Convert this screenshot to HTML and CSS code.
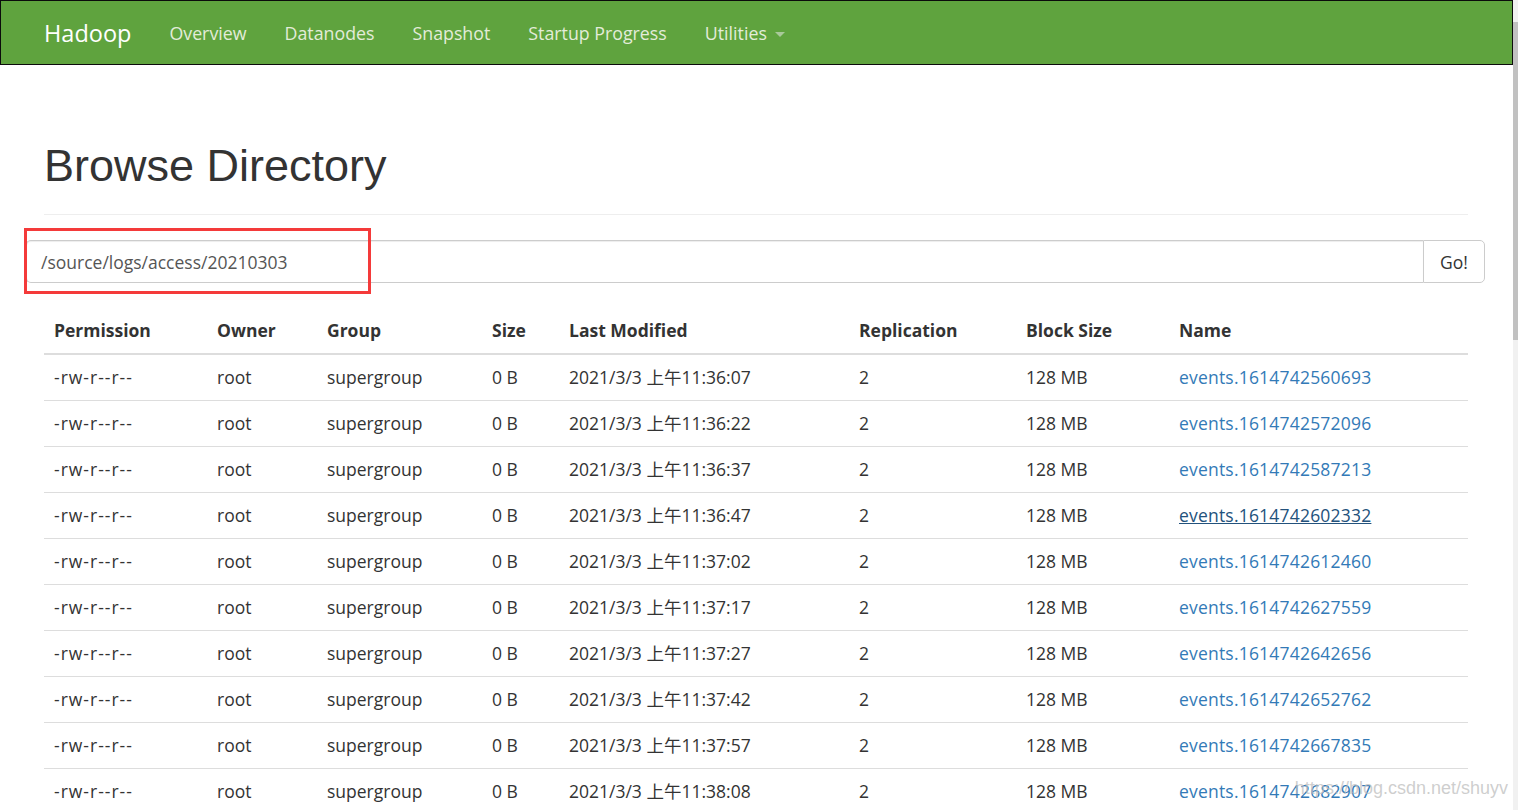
FILE: index.html
```html
<!DOCTYPE html>
<html>
<head>
<meta charset="utf-8">
<link rel="stylesheet" href="styles.css">
</head>
<body>
<div class="page">
  <nav class="navbar">
    <a class="brand">Hadoop</a>
    <ul class="nav">
      <li><a>Overview</a></li>
      <li><a>Datanodes</a></li>
      <li><a>Snapshot</a></li>
      <li><a>Startup Progress</a></li>
      <li><a>Utilities <span class="caret"></span></a></li>
    </ul>
  </nav>
  <div class="container">
    <div class="page-header"><h1>Browse Directory</h1></div>
    <div class="input-group">
      <div class="form-control">/source/logs/access/20210303</div>
      <div class="btn">Go!</div>
      <div class="annot"></div>
    </div>
    <table class="table">
      <colgroup>
        <col class="c1"><col class="c2"><col class="c3"><col class="c4"><col class="c5"><col class="c6"><col class="c7"><col class="c8">
      </colgroup>
      <thead>
        <tr><th>Permission</th><th>Owner</th><th>Group</th><th>Size</th><th>Last Modified</th><th>Replication</th><th>Block Size</th><th>Name</th></tr>
      </thead>
      <tbody>
        <tr><td class="perm">-rw-r--r--</td><td>root</td><td>supergroup</td><td>0 B</td><td>2021/3/3 上午11:36:07</td><td>2</td><td>128 MB</td><td><a>events.1614742560693</a></td></tr>
        <tr><td class="perm">-rw-r--r--</td><td>root</td><td>supergroup</td><td>0 B</td><td>2021/3/3 上午11:36:22</td><td>2</td><td>128 MB</td><td><a>events.1614742572096</a></td></tr>
        <tr><td class="perm">-rw-r--r--</td><td>root</td><td>supergroup</td><td>0 B</td><td>2021/3/3 上午11:36:37</td><td>2</td><td>128 MB</td><td><a>events.1614742587213</a></td></tr>
        <tr><td class="perm">-rw-r--r--</td><td>root</td><td>supergroup</td><td>0 B</td><td>2021/3/3 上午11:36:47</td><td>2</td><td>128 MB</td><td><a class="hover">events.1614742602332</a></td></tr>
        <tr><td class="perm">-rw-r--r--</td><td>root</td><td>supergroup</td><td>0 B</td><td>2021/3/3 上午11:37:02</td><td>2</td><td>128 MB</td><td><a>events.1614742612460</a></td></tr>
        <tr><td class="perm">-rw-r--r--</td><td>root</td><td>supergroup</td><td>0 B</td><td>2021/3/3 上午11:37:17</td><td>2</td><td>128 MB</td><td><a>events.1614742627559</a></td></tr>
        <tr><td class="perm">-rw-r--r--</td><td>root</td><td>supergroup</td><td>0 B</td><td>2021/3/3 上午11:37:27</td><td>2</td><td>128 MB</td><td><a>events.1614742642656</a></td></tr>
        <tr><td class="perm">-rw-r--r--</td><td>root</td><td>supergroup</td><td>0 B</td><td>2021/3/3 上午11:37:42</td><td>2</td><td>128 MB</td><td><a>events.1614742652762</a></td></tr>
        <tr><td class="perm">-rw-r--r--</td><td>root</td><td>supergroup</td><td>0 B</td><td>2021/3/3 上午11:37:57</td><td>2</td><td>128 MB</td><td><a>events.1614742667835</a></td></tr>
        <tr><td class="perm">-rw-r--r--</td><td>root</td><td>supergroup</td><td>0 B</td><td>2021/3/3 上午11:38:08</td><td>2</td><td>128 MB</td><td><a>events.1614742682907</a></td></tr>
      </tbody>
    </table>
  </div>
  <div class="watermark">https://blog.csdn.net/shuyv</div>
</div>
<div class="scrollbar"><div class="thumb"></div></div>
</body>
</html>
```
FILE: styles.css
```css
html, body {
  margin: 0;
  padding: 0;
  height: 810px;
  overflow: hidden;
  background: #fff;
}
body {
  display: flex;
  font-family: "Open Sans", "Noto Sans CJK SC", sans-serif;
  font-size: 17.5px;
  color: #333;
}
.page {
  width: 1513px;
  position: relative;
  height: 810px;
  overflow: hidden;
}
.scrollbar {
  width: 5px;
  background: #f1f1f1;
  height: 810px;
  display: flex;
  flex-direction: column;
}
.thumb {
  margin-top: 22px;
  height: 318px;
  background: #c1c1c1;
}
.navbar {
  height: 63px;
  background: #5fa33e;
  border: 1px solid #0b0b0b;
  display: flex;
  align-items: center;
  padding-left: 43px;
}
.brand {
  color: #fff;
  font-size: 23.5px;
  margin-right: 38px;
}
.nav {
  display: flex;
  list-style: none;
  margin: 0;
  padding: 0;
  gap: 38px;
}
.nav a {
  color: #e3ecd9;
  font-size: 17.8px;
}
.caret {
  display: inline-block;
  width: 0;
  height: 0;
  margin-left: 4px;
  vertical-align: middle;
  border-top: 5px solid #a9c99a;
  border-left: 5px solid transparent;
  border-right: 5px solid transparent;
}
.container {
  padding: 25px 44px 0 44px;
}
.page-header {
  border-bottom: 1px solid #eee;
  padding-bottom: 11px;
  margin: 0 0 25px 0;
  width: 1424px;
}
h1 {
  font-family: "Liberation Sans", Arial, sans-serif;
  font-weight: 500;
  font-size: 45px;
  line-height: 49.5px;
  margin: 51px 0 12.5px 0;
  color: #333;
}
.input-group {
  position: relative;
  display: flex;
  margin-left: -18px;
  width: 1459px;
  height: 43px;
  margin-bottom: 25px;
}
.form-control {
  flex: 1;
  border: 1px solid #ccc;
  border-right: none;
  border-radius: 5px 0 0 5px;
  box-shadow: inset 0 1px 1px rgba(0,0,0,0.075);
  padding: 0 14px;
  display: flex;
  align-items: center;
  color: #555;
}
.btn {
  width: 60px;
  border: 1px solid #ccc;
  border-radius: 0 5px 5px 0;
  display: flex;
  align-items: center;
  justify-content: center;
  color: #333;
}
.annot {
  position: absolute;
  left: -2px;
  top: -12px;
  width: 341px;
  height: 60px;
  border: 3px solid #f43a3a;
}
.table {
  width: 1424px;
  border-collapse: collapse;
  table-layout: fixed;
}
.c1 { width: 163px; }
.c2 { width: 110px; }
.c3 { width: 165px; }
.c4 { width: 77px; }
.c5 { width: 290px; }
.c6 { width: 167px; }
.c7 { width: 153px; }
.c8 { width: 299px; }
th {
  text-align: left;
  font-weight: 700;
  padding: 10px;
  line-height: 25px;
  border-bottom: 2px solid #ddd;
}
td {
  padding: 10px;
  line-height: 25px;
  border-top: 1px solid #ddd;
  white-space: nowrap;
}
td.perm {
  letter-spacing: 1px;
}
tbody tr:first-child td { border-top: none; }
td a {
  color: #337ab7;
  letter-spacing: 0.2px;
}
td a.hover {
  color: #23527c;
  text-decoration: underline;
}
.watermark {
  position: absolute;
  right: 5px;
  top: 778px;
  font-family: "Liberation Sans", Arial, sans-serif;
  font-size: 18px;
  color: rgba(190,190,190,0.75);
}
```
